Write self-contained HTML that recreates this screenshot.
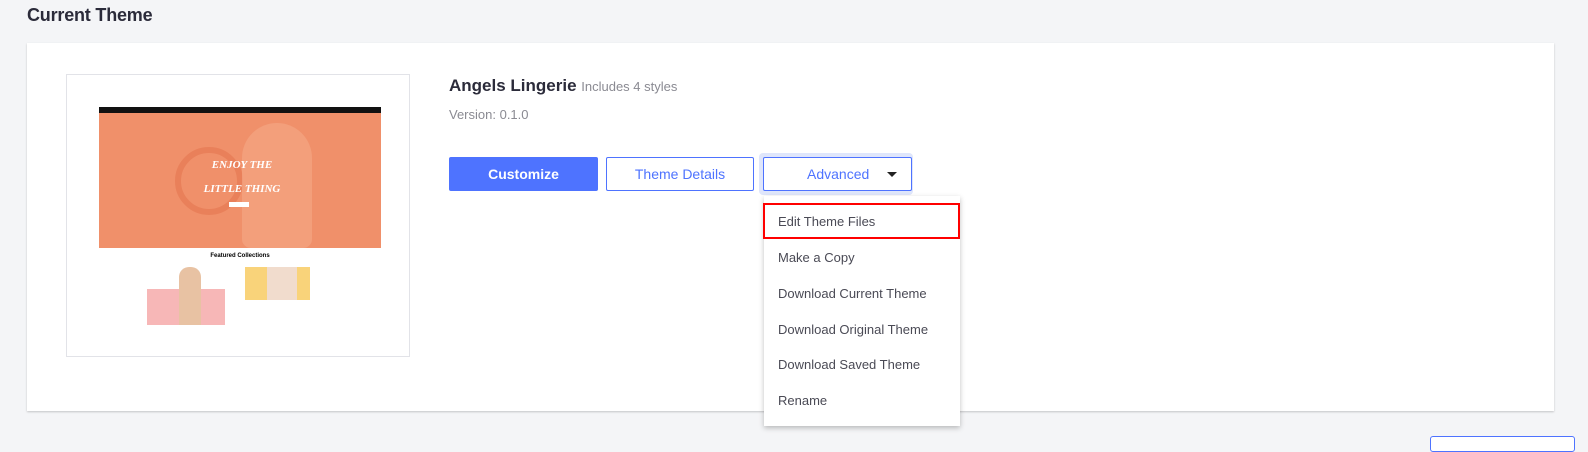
<!DOCTYPE html>
<html><head><style>
body{margin:0;width:1588px;height:446px;background:#f4f5f7;font-family:"Liberation Sans",sans-serif;position:relative;overflow:hidden}
.abs{position:absolute}
h1{position:absolute;left:27px;top:5px;margin:0;font-size:18px;font-weight:bold;color:#2b2b3a;letter-spacing:-0.2px}
.card{left:27px;top:43px;width:1527px;height:368px;background:#fff;box-shadow:0 1px 2px rgba(0,0,0,.2)}
.thumb{left:66px;top:74px;width:342px;height:281px;border:1px solid #e2e3e8;background:#fff}
.btn{position:absolute;top:157px;height:34px;box-sizing:border-box;font-size:14px;display:flex;align-items:center;justify-content:center;border-radius:2px}
.menu{left:764px;top:196px;width:196px;height:230px;background:#fff;box-shadow:0 2px 5px rgba(0,0,0,.25)}
.item{position:absolute;left:14px;font-size:13px;color:#4a4a55}
</style></head><body>
<h1>Current Theme</h1>
<div class="abs card"></div>
<div class="abs thumb">
 <div class="abs" style="left:32px;top:32px;width:282px;height:6px;background:#111"></div>
 <div class="abs" style="left:32px;top:38px;width:282px;height:135px;background:#f0906a"></div>
 <div class="abs" style="left:108px;top:72px;width:56px;height:56px;border:6px solid #e9805a;border-radius:50%"></div>
 <div class="abs" style="left:175px;top:48px;width:70px;height:125px;background:#f3a583;border-radius:40px 40px 10px 10px;opacity:.7"></div>
 <div class="abs" style="left:130px;top:78px;width:90px;font:italic bold 11px 'Liberation Serif',serif;color:#fff;text-align:center;line-height:24px">ENJOY THE<br>LITTLE THING</div>
 <div class="abs" style="left:162px;top:127px;width:20px;height:5px;background:#fff"></div>
 <div class="abs" style="left:32px;top:178px;width:282px;text-align:center;font-size:6px;font-weight:bold;color:#000">Featured Collections</div>
 <div class="abs" style="left:80px;top:214px;width:78px;height:36px;background:#f7b7b7"></div>
 <div class="abs" style="left:112px;top:192px;width:22px;height:58px;background:#e8c2a3;border-radius:10px 10px 0 0"></div>
 <div class="abs" style="left:178px;top:192px;width:65px;height:33px;background:#f9d37a"></div>
 <div class="abs" style="left:200px;top:192px;width:30px;height:33px;background:#f1dccd"></div>
</div>
<div class="abs" style="left:449px;top:76px;font-size:17px;font-weight:bold;color:#2b2b3a">Angels Lingerie <span style="font-size:13px;font-weight:normal;color:#8a8a92">Includes 4 styles</span></div>
<div class="abs" style="left:449px;top:107px;font-size:13px;color:#8a8a92">Version: 0.1.0</div>
<div class="btn" style="left:449px;width:149px;background:#4e73ff;color:#fff;font-weight:bold">Customize</div>
<div class="btn" style="left:606px;width:148px;border:1px solid #4e73ff;color:#4e73ff">Theme Details</div>
<div class="abs" style="left:759px;top:153px;width:154px;height:42px;background:#dfe6fb;border-radius:4px"></div>
<div class="btn" style="left:763px;width:149px;border:1px solid #4e73ff;color:#4e73ff;background:#fff;justify-content:flex-start;padding-left:43px">Advanced<span style="position:absolute;right:14px;top:14px;border-left:5px solid transparent;border-right:5px solid transparent;border-top:5px solid #222"></span></div>
<div class="abs menu">
 <div class="abs" style="left:-1px;top:7px;height:36px;border:2px solid #f00;box-sizing:border-box;width:197px"></div>
 <div class="item" style="top:18px">Edit Theme Files</div>
 <div class="item" style="top:54px">Make a Copy</div>
 <div class="item" style="top:90px">Download Current Theme</div>
 <div class="item" style="top:126px">Download Original Theme</div>
 <div class="item" style="top:161px">Download Saved Theme</div>
 <div class="item" style="top:197px">Rename</div>
</div>
<div class="abs" style="left:1430px;top:436px;width:143px;height:14px;border:1px solid #4e73ff;border-radius:3px;background:#fff"></div>
</body></html>
